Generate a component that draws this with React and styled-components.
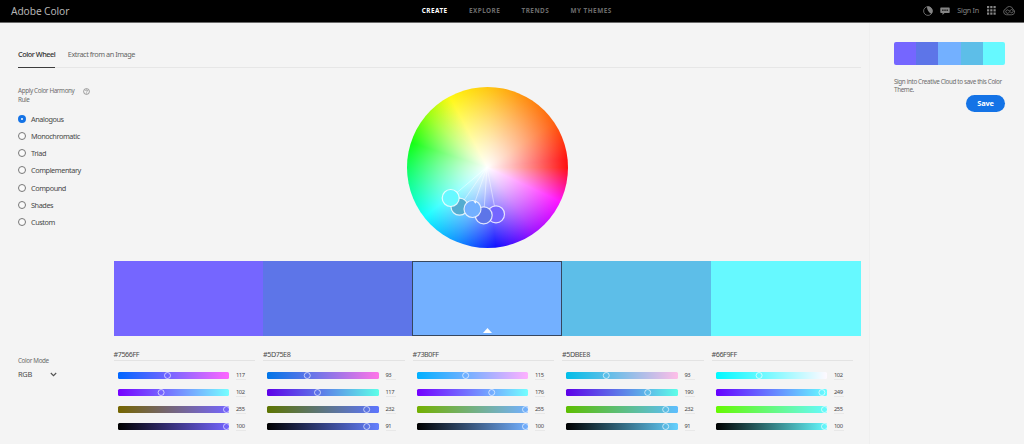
import { useState } from 'react';
import styled, { createGlobalStyle } from 'styled-components';

const GlobalStyle = createGlobalStyle`
  * {
    box-sizing: border-box;
  }

  body {
    margin: 0;
    background: #f4f4f4;
    font-family: 'Noto Sans', 'Open Sans', sans-serif;
    color: #4b4b4b;
    overflow: hidden;
  }
`;

const Page = styled.div`
  width: 1024px;
  height: 444px;
  display: flex;
  flex-direction: column;
`;

const Header = styled.header`
  height: 23px;
  flex: none;
  display: grid;
  grid-template-columns: 410.7px 1fr auto;
  align-items: center;
  padding: 0 9px 1px 11px;
  background: #000;
  border-bottom: 1px solid #6a6a6a;
`;

const Brand = styled.div`
  font-size: 10.2px;
  line-height: 14px;
  letter-spacing: -0.08px;
  color: #b4b4b4;
`;

const Nav = styled.nav`
  display: flex;
  gap: 21.2px;
`;

const NavLink = styled.a`
  font-size: 6.4px;
  line-height: 10px;
  font-weight: 700;
  letter-spacing: 0.48px;
  color: ${props => props.$active ? '#fff' : '#6c6c6c'};
`;

const HeaderTools = styled.div`
  display: flex;
  align-items: center;
  color: #858585;

  svg {
    display: block;
  }
`;

const SignIn = styled.span`
  margin: 0 8px 0 7px;
  font-size: 7.2px;
  line-height: 10px;
  letter-spacing: -0.25px;
  position: relative;
  top: -0.5px;
`;

const Body = styled.div`
  flex: 1;
  display: grid;
  grid-template-columns: 869px 155px;
`;

const Main = styled.main`
  padding: 22px 8px 0 18px;
`;

const Tabs = styled.div`
  display: flex;
  gap: 12.5px;
  height: 23px;
  border-bottom: 1px solid #e6e6e6;
`;

const Tab = styled.button`
  height: 23px;
  padding: 0 0 4px;
  border: none;
  border-bottom: 1px solid ${props => props.$active ? '#3c3c3c' : 'transparent'};
  background: none;
  font-family: inherit;
  font-size: 7.3px;
  line-height: 10px;
  letter-spacing: -0.45px;
  font-weight: ${props => props.$active ? 500 : 400};
  color: ${props => props.$active ? '#303030' : '#666'};
  white-space: nowrap;
`;

const Workspace = styled.section`
  height: 193px;
  display: grid;
  grid-template-columns: 389px 1fr;
`;

const Harmony = styled.div`
  padding-top: 17.5px;
`;

const HarmonyTitle = styled.div`
  display: flex;
  align-items: flex-start;
  gap: 7px;
  margin-bottom: 6.3px;

  svg {
    margin-top: 2px;
  }
`;

const SmallLabel = styled.div`
  width: ${props => props.$width || 'auto'};
  font-size: 6.3px;
  line-height: 9.4px;
  letter-spacing: -0.36px;
  color: #6c6c6c;
  white-space: nowrap;
`;

const RuleList = styled.div`
  display: flex;
  flex-direction: column;
`;

const Rule = styled.label`
  display: flex;
  align-items: center;
  gap: 5px;
  height: 17.1px;
  font-size: 7.3px;
  line-height: 10px;
  letter-spacing: -0.42px;
  color: #484848;
`;

const Radio = styled.span`
  width: 8px;
  height: 8px;
  border-radius: 50%;
  border: ${props => props.$checked ? '3px solid #1473e6' : '1px solid #777'};
  background: #fafafa;
`;

const WheelArea = styled.div`
  padding-top: 19px;
`;

const Wheel = styled.div`
  width: 161px;
  height: 161px;
  border-radius: 50%;
  background:
    radial-gradient(
      circle closest-side,
      #fff 0%,
      rgba(255, 255, 255, 0.92) 8%,
      rgba(255, 255, 255, 0.72) 30%,
      rgba(255, 255, 255, 0.42) 60%,
      rgba(255, 255, 255, 0.08) 92%,
      transparent 100%
    ),
    conic-gradient(
      from 90deg,
      #ff1010 0deg,
      #ff10ff 25deg,
      #a010ff 54deg,
      #1010ff 84deg,
      #1090ff 112deg,
      #10ffff 142deg,
      #10ff80 172deg,
      #10ff10 198deg,
      #90ff10 220deg,
      #fff810 242deg,
      #ffc410 272deg,
      #ff9010 298deg,
      #ff6010 326deg,
      #ff1010 354deg,
      #ff1010 360deg
    );

  svg {
    display: block;
  }
`;

const Swatches = styled.div`
  display: flex;
  height: 75px;
  width: 747px;
  margin-left: 95.6px;
`;

const Swatch = styled.div`
  flex: 1;
  display: flex;
  align-items: flex-end;
  justify-content: center;
  padding-bottom: 3px;
  background: ${props => props.$color};
  box-shadow: ${props => props.$active ? 'inset 0 0 0 1px #36475f' : 'none'};
`;

const Controls = styled.section`
  display: flex;
  padding-top: 12px;
`;

const ModePicker = styled.div`
  width: 95.5px;
  padding-top: 8px;
`;

const ModeSelect = styled.div`
  display: flex;
  align-items: center;
  gap: 18px;
  margin-top: 3.5px;
  font-size: 7.4px;
  line-height: 11px;
  letter-spacing: -0.25px;
  color: #4b4b4b;
`;

const ColorColumn = styled.div`
  width: 149.5px;
`;

const HexField = styled.div`
  width: 141.5px;
  height: 13px;
  border-bottom: 1px solid #e3e3e3;
  font-size: 7.2px;
  line-height: 10px;
  padding-top: 1px;
  letter-spacing: -0.42px;
  color: #4b4b4b;
`;

const SliderList = styled.div`
  padding: 5.6px 0 0 4px;
`;

const SliderRow = styled.div`
  display: flex;
  align-items: center;
  gap: 7px;
  height: 17.1px;
`;

const Track = styled.div`
  width: 111.5px;
  height: 7px;
  border-radius: 1.5px;
  overflow: hidden;
  background: linear-gradient(to right, ${props => props.$from}, ${props => props.$to});
`;

const Knob = styled.div`
  width: 7px;
  height: 7px;
  margin-left: -3.3px;
  border: 1px solid rgba(255, 255, 255, 0.65);
  border-radius: 50%;
`;

const SliderValue = styled.div`
  width: 10px;
  height: 10px;
  border-bottom: 1px solid #e8e8e8;
  font-size: 5.8px;
  line-height: 10px;
  letter-spacing: -0.5px;
  color: #484848;
`;

const Aside = styled.aside`
  border-left: 1px solid #efefef;
  padding: 19px 19px 0 24px;
  display: flex;
  flex-direction: column;
`;

const ThemePreview = styled.div`
  display: flex;
  height: 23px;
  border-radius: 2px;
  overflow: hidden;
`;

const PreviewColor = styled.div`
  flex: 1;
  background: ${props => props.$color};
`;

const SaveNote = styled.p`
  margin: 12.5px 0 0;
  font-size: 6.3px;
  line-height: 8.5px;
  letter-spacing: -0.36px;
  color: #6c6c6c;
  white-space: nowrap;
`;

const SaveButton = styled.button`
  align-self: flex-end;
  width: 39px;
  height: 17px;
  padding: 0;
  border: none;
  border-radius: 9px;
  background: #1473e6;
  color: #fff;
  font-family: inherit;
  font-size: 7.4px;
  line-height: 17px;
  font-weight: 700;
  letter-spacing: -0.2px;
`;

const rules = [
  'Analogous',
  'Monochromatic',
  'Triad',
  'Complementary',
  'Compound',
  'Shades',
  'Custom'
];

const colors = [
  { hex: '#7566FF', rgb: [117, 102, 255], brightness: 100, x: 89, y: 47.3 },
  { hex: '#5D75E8', rgb: [93, 117, 232], brightness: 91, x: 76.7, y: 48.3 },
  { hex: '#73B0FF', rgb: [115, 176, 255], brightness: 100, x: 65.5, y: 42 },
  { hex: '#5DBEE8', rgb: [93, 190, 232], brightness: 91, x: 52.5, y: 39.7 },
  { hex: '#66F9FF', rgb: [102, 249, 255], brightness: 100, x: 43.7, y: 31 }
];

// stacking of the wheel handles, bottom first
const handleOrder = [3, 0, 1, 2, 4];

const toCss = rgb => `rgb(${rgb.join(', ')})`;

const withChannel = (rgb, index, value) =>
  toCss(rgb.map((channel, i) => (i === index ? value : channel)));

const HelpIcon = () => (
  <svg width="7" height="7" viewBox="0 0 14 14" fill="none" stroke="#757575" strokeWidth="1.4">
    <circle cx="7" cy="7" r="5.8" />
    <path d="M5.2 5.6a1.8 1.8 0 1 1 2.5 1.7c-.5.3-.7.5-.7 1.2M7 9.6v1.3" />
  </svg>
);

const ContrastIcon = () => (
  <svg width="10" height="10" viewBox="0 0 20 20">
    <circle cx="10" cy="10" r="8.8" fill="none" stroke="currentColor" strokeWidth="1.5" />
    <path d="M8 1.4A8.800 8.800 0 0 1 16.500 16Q8 10.500 8 1.400z" fill="currentColor" />
  </svg>
);

const ChatIcon = () => (
  <svg width="10" height="10" viewBox="0 0 20 20" style={{ marginLeft: 7 }}>
    <path d="M2 3h16a1.4 1.4 0 0 1 1.4 1.4v8A1.4 1.4 0 0 1 18 13.8H9l-4 4v-4H2A1.4 1.4 0 0 1 .6 12.4v-8A1.4 1.4 0 0 1 2 3z" fill="currentColor" />
    <path d="M4.5 7H7v3H4.5zM8.8 7h2.5v3H8.8zM13.1 7h2.5v3h-2.5z" fill="#111" />
  </svg>
);

const AppsIcon = () => (
  <svg width="9" height="9" viewBox="0 0 18 18" fill="currentColor">
    {[0, 6.5, 13].map(y => [0, 6.5, 13].map(x => (
      <rect key={`${x}-${y}`} x={x} y={y} width="4.4" height="4.4" />
    )))}
  </svg>
);

const CloudIcon = () => (
  <svg width="12" height="10" viewBox="0 0 24 20" fill="none" stroke="#777" strokeWidth="1.6" style={{ marginLeft: 7 }}>
    <path d="M7 17.5a6 6 0 0 1-1.2-11.8A7.5 7.5 0 0 1 20 6.500a5.800 5.800 0 0 1-3 11z" />
    <path d="M12.5 12.5 11 14a3.400 3.400 0 1 1 0-5.500l4 4a3.200 3.200 0 1 0 0-4.500l-2 2" />
  </svg>
);

const ColorWheel = () => (
  <Wheel>
    <svg width="161" height="161" viewBox="0 0 161 161">
      {colors.map(({ hex, x, y }) => (
        <line key={hex} x1="80" y1="80" x2={x} y2={y + 80} stroke="#fff" strokeOpacity="0.45" />
      ))}
      {handleOrder.map(i => (
        <circle
          key={colors[i].hex}
          cx={colors[i].x}
          cy={colors[i].y + 80}
          r="8.5"
          fill={i === 3 ? '#54acd0' : colors[i].hex}
          stroke="#fff"
          strokeOpacity="0.8"
          strokeWidth="1.2"
        />
      ))}
      <path d="M66.5 114l3.4.4-1.6 2.3z" fill="#fff" />
    </svg>
  </Wheel>
);

const ColorSliders = ({ color }) => {
  const { hex, rgb, brightness } = color;
  const full = rgb.map(channel => Math.round(Math.min(255, channel / (brightness / 100))));
  const sliders = [
    ...rgb.map((value, i) => ({
      value,
      max: 255,
      from: withChannel(rgb, i, 0),
      to: withChannel(rgb, i, 255)
    })),
    { value: brightness, max: 100, from: '#000', to: toCss(full) }
  ];

  return (
    <ColorColumn>
      <HexField>{hex}</HexField>
      <SliderList>
        {sliders.map(({ value, max, from, to }, i) => (
          <SliderRow key={i}>
            <Track $from={from} $to={to}>
              <Knob style={{ transform: `translateX(${(value / max) * 109}px)` }} />
            </Track>
            <SliderValue>{value}</SliderValue>
          </SliderRow>
        ))}
      </SliderList>
    </ColorColumn>
  );
};

const App = () => {
  const [rule, setRule] = useState('Analogous');

  return (
    <Page>
      <GlobalStyle />
      <Header>
        <Brand>Adobe Color</Brand>
        <Nav>
          <NavLink $active>CREATE</NavLink>
          <NavLink>EXPLORE</NavLink>
          <NavLink>TRENDS</NavLink>
          <NavLink>MY THEMES</NavLink>
        </Nav>
        <HeaderTools>
          <ContrastIcon />
          <ChatIcon />
          <SignIn>Sign In</SignIn>
          <AppsIcon />
          <CloudIcon />
        </HeaderTools>
      </Header>
      <Body>
        <Main>
          <Tabs>
            <Tab $active>Color Wheel</Tab>
            <Tab>Extract from an Image</Tab>
          </Tabs>
          <Workspace>
            <Harmony>
              <HarmonyTitle>
                <SmallLabel $width="57.5px">Apply Color Harmony<br />Rule</SmallLabel>
                <HelpIcon />
              </HarmonyTitle>
              <RuleList>
                {rules.map(name => (
                  <Rule key={name} onClick={() => setRule(name)}>
                    <Radio $checked={name === rule} />
                    {name}
                  </Rule>
                ))}
              </RuleList>
            </Harmony>
            <WheelArea>
              <ColorWheel />
            </WheelArea>
          </Workspace>
          <Swatches>
            {colors.map(({ hex }, i) => (
              <Swatch key={hex} $color={hex} $active={i === 2}>
                {i === 2 && (
                  <svg width="9" height="5" viewBox="0 0 9 5">
                    <path d="M4.5 0 9 5H0z" fill="#fff" />
                  </svg>
                )}
              </Swatch>
            ))}
          </Swatches>
          <Controls>
            <ModePicker>
              <SmallLabel>Color Mode</SmallLabel>
              <ModeSelect>
                RGB
                <svg width="7" height="5" viewBox="0 0 7 5" fill="none" stroke="#505050" strokeWidth="1.1">
                  <path d="M.8 1 3.5 3.7 6.2 1" />
                </svg>
              </ModeSelect>
            </ModePicker>
            {colors.map(color => (
              <ColorSliders key={color.hex} color={color} />
            ))}
          </Controls>
        </Main>
        <Aside>
          <ThemePreview>
            {colors.map(({ hex }) => (
              <PreviewColor key={hex} $color={hex} />
            ))}
          </ThemePreview>
          <SaveNote>Sign into Creative Cloud to save this Color<br />Theme.</SaveNote>
          <SaveButton>Save</SaveButton>
        </Aside>
      </Body>
    </Page>
  );
};

export default App;
